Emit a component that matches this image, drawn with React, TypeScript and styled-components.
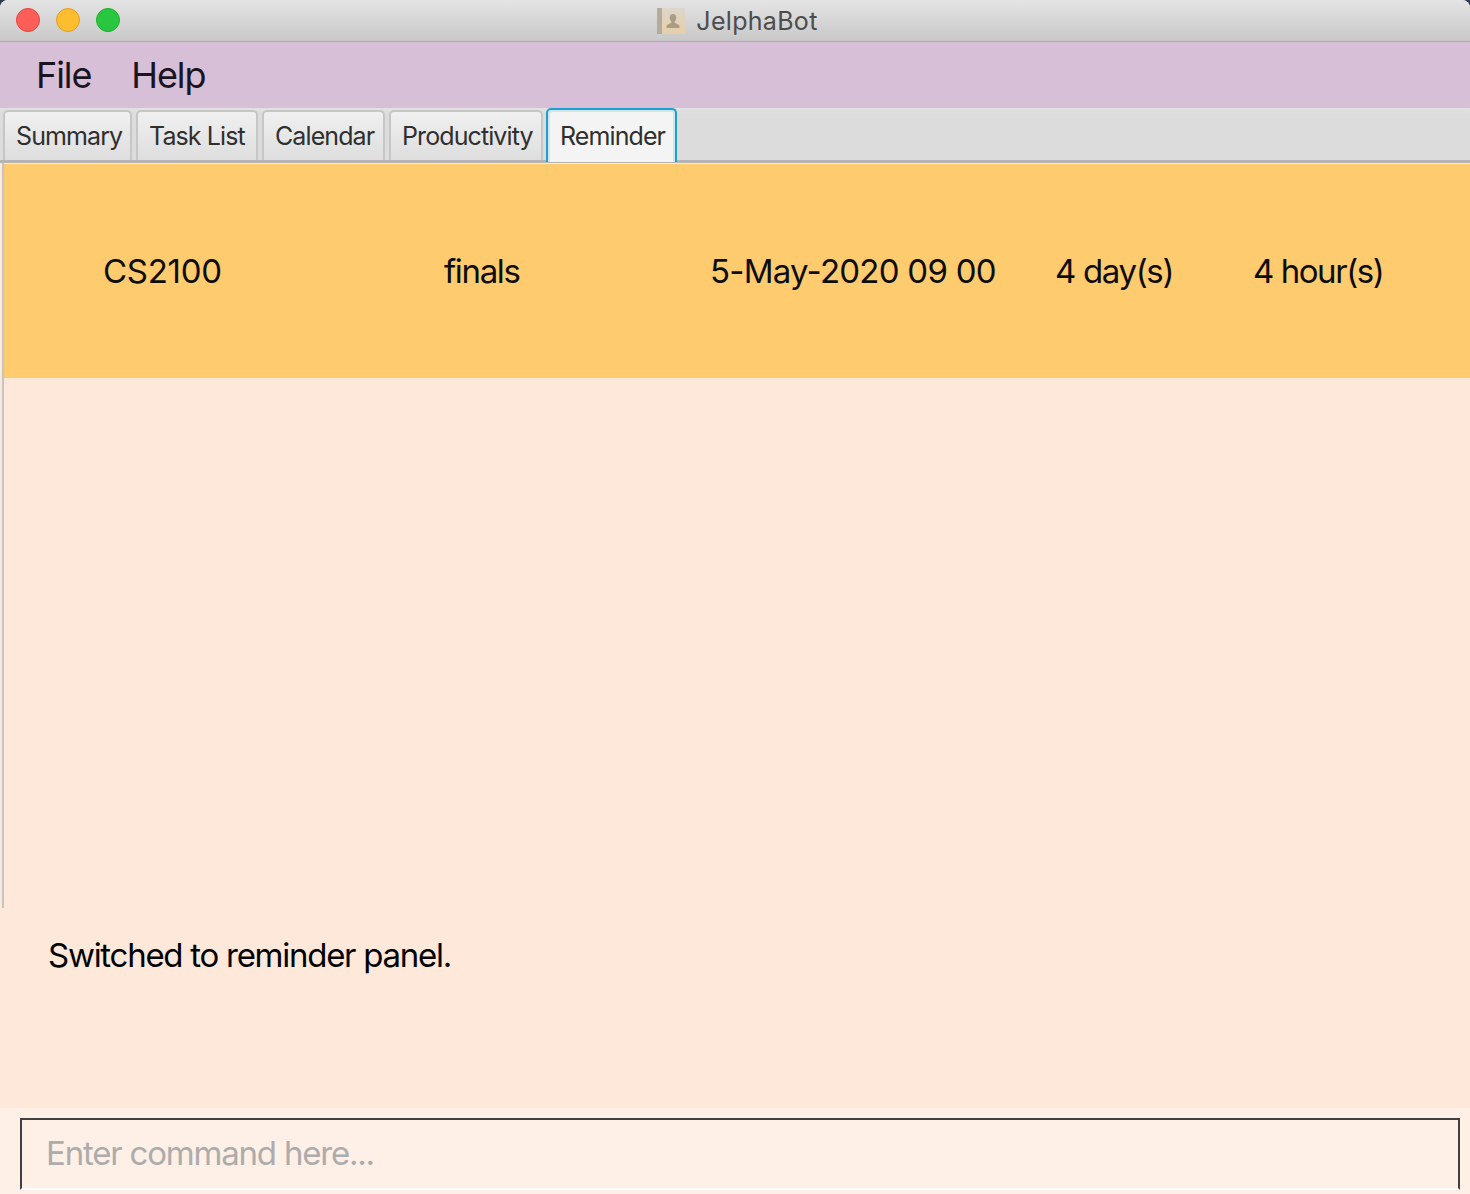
import styled, { createGlobalStyle } from "styled-components";

const tabs = [
  { label: "Summary", width: 129 },
  { label: "Task List", width: 122 },
  { label: "Calendar", width: 123 },
  { label: "Productivity", width: 154 },
  { label: "Reminder", width: 131 },
];

const GlobalStyle = createGlobalStyle`
  html, body {
    margin: 0;
    padding: 0;
    background: #2b3a55;
  }
`;

function AppIcon() {
  return (
    <svg width="28" height="26" viewBox="0 0 28 26">
      <defs>
        <linearGradient id="book" x1="0" y1="0" x2="0" y2="1">
          <stop offset="0" stopColor="#dcd6cc" />
          <stop offset="1" stopColor="#e6cfa8" />
        </linearGradient>
      </defs>
      <rect x="0" y="0" width="28" height="26" rx="1" fill="url(#book)" />
      <rect x="0" y="0" width="5" height="26" fill="#b5ab9b" />
      <path
        d="M16 6c2.200 0 3.300 1.700 3.300 3.800 0 1.700-.8 3-1.500 3.700v1.500c1.800.8 4.700 1.500 4.700 3.500v1.500h-13v-1.500c0-2 2.900-2.700 4.700-3.500v-1.500c-.7-.7-1.500-2-1.500-3.700C12.700 7.700 13.800 6 16 6z"
        fill="#ab9c86"
      />
    </svg>
  );
}

export default function App() {
  return (
    <>
      <GlobalStyle />
      <Window>
        <TitleBar>
          <Lights>
            <Light $fill="#fd5f58" $edge="#e0443e" />
            <Light $fill="#febc2f" $edge="#dfa023" />
            <Light $fill="#29c73f" $edge="#1dad2b" />
          </Lights>
          <WindowTitle>
            <AppIcon />
            JelphaBot
          </WindowTitle>
        </TitleBar>
        <MenuBar>
          <MenuItem>File</MenuItem>
          <MenuItem>Help</MenuItem>
        </MenuBar>
        <TabBar>
          {tabs.map((tab) => (
            <Tab key={tab.label} $width={tab.width} $active={tab.label === "Reminder"}>
              <TabLabel>{tab.label}</TabLabel>
            </Tab>
          ))}
        </TabBar>
        <Panel>
          <ReminderCard>
            <ModuleCell>CS2100</ModuleCell>
            <DescCell>finals</DescCell>
            <DateCell>5-May-2020 09 00</DateCell>
            <DaysCell>4 day(s)</DaysCell>
            <HoursCell>4 hour(s)</HoursCell>
          </ReminderCard>
        </Panel>
        <ResultBox>Switched to reminder panel.</ResultBox>
        <CommandBox>
          <CommandInput placeholder="Enter command here..." readOnly />
        </CommandBox>
      </Window>
    </>
  );
}

const Window = styled.div`
  width: 1470px;
  height: 1194px;
  overflow: hidden;
  border-radius: 8px 8px 0 0;
  display: flex;
  flex-direction: column;
  font-family: Inter, "Liberation Sans", sans-serif;
  background: #fee8da;
`;

const TitleBar = styled.div`
  height: 41px;
  flex: none;
  position: relative;
  display: flex;
  align-items: center;
  justify-content: center;
  background: linear-gradient(#e4e4e4, #c8c8c8);
  border-bottom: 1px solid #a9a9a9;
`;

const Lights = styled.div`
  position: absolute;
  left: 16px;
  top: 8px;
  display: flex;
  gap: 16px;
`;

const Light = styled.span<{ $fill: string; $edge: string }>`
  width: 24px;
  height: 24px;
  box-sizing: border-box;
  border-radius: 50%;
  background: ${({ $fill }) => $fill};
  border: 1px solid ${({ $edge }) => $edge};
`;

const WindowTitle = styled.div`
  display: flex;
  align-items: center;
  gap: 11px;
  margin-left: 5px;
  font-size: 25px;
  letter-spacing: 0.3px;
  color: #4c4c4c;
`;

const MenuBar = styled.div`
  height: 66px;
  flex: none;
  display: flex;
  align-items: center;
  gap: 40px;
  padding: 0 0 0 36px;
  background: #d7bfd8;
`;

const MenuItem = styled.span`
  font-size: 36px;
  letter-spacing: -1.100px;
  color: #1a1420;
`;

const TabBar = styled.div`
  height: 52px;
  flex: none;
  display: flex;
  align-items: flex-end;
  gap: 4px;
  padding-left: 3px;
  background: linear-gradient(#e2e2e2, #dcdcdc 12%);
  border-bottom: 3px solid #b4b4b4;
  box-sizing: content-box;
`;

const Tab = styled.div<{ $active?: boolean; $width: number }>`
  width: ${({ $width }) => $width}px;
  height: ${({ $active }) => ($active ? "54px" : "50px")};
  margin: 0 0 ${({ $active }) => ($active ? "-2px" : "0")} ${({ $active }) => ($active ? "-1px" : "0")};
  box-sizing: border-box;
  display: flex;
  align-items: center;
  padding: 0 ${({ $active }) => ($active ? "8px" : "7px")} 0 ${({ $active }) => ($active ? "12px" : "11px")};
  border-radius: 5px 5px 0 0;
  border: ${({ $active }) => ($active ? "2px solid #1f9fd0" : "2px solid #c6c6c6")};
  border-bottom: none;
  background: ${({ $active }) =>
    $active ? "#f4f4f4" : "linear-gradient(#f0f0f0, #dedede)"};
  box-shadow: ${({ $active }) => ($active ? "inset 2px 2px 0 #cfe6ef, inset -2px 0 0 #cfe6ef" : "none")};
  font-size: 25px;
  letter-spacing: -0.900px;
  color: #2f2f2f;
`;

const TabLabel = styled.span`
  flex: 1;
  min-width: 0;
  overflow: hidden;
  white-space: nowrap;
`;

const Panel = styled.div`
  flex: 1;
  min-height: 0;
  margin-left: 2px;
  padding-top: 1px;
  background: #fee8da;
  border-left: 2px solid #c4c4c4;
`;

const ReminderCard = styled.div`
  height: 214px;
  display: flex;
  align-items: center;
  background: #fecb6e;
  font-size: 33px;
  color: #0d0d0d;
  white-space: nowrap;
`;

const ModuleCell = styled.span`
  width: 440px;
  padding-left: 99px;
  box-sizing: border-box;
  letter-spacing: -0.300px;
`;

const DescCell = styled.span`
  width: 267px;
  letter-spacing: -1.350px;
`;

const DateCell = styled.span`
  width: 345px;
  margin-left: -1px;
  letter-spacing: -0.750px;
`;

const DaysCell = styled.span`
  width: 198px;
  letter-spacing: -1.350px;
`;

const HoursCell = styled.span`
  letter-spacing: -1.450px;
`;

const ResultBox = styled.div`
  height: 200px;
  flex: none;
  box-sizing: border-box;
  padding: 27px 0 0 48px;
  background: #fee8da;
  font-size: 33px;
  letter-spacing: -1.270px;
  color: #000;
`;

const CommandBox = styled.div`
  height: 86px;
  flex: none;
  box-sizing: border-box;
  padding: 10px 10px 0 20px;
  background: #fef0e6;
`;

const CommandInput = styled.input`
  display: block;
  width: 100%;
  height: 72px;
  box-sizing: border-box;
  padding: 0 0 2px 24px;
  background: #fef0e6;
  border: 2px solid #40403e;
  border-bottom: 2px solid #fff;
  border-radius: 0;
  outline: none;
  font-family: inherit;
  font-size: 33px;
  letter-spacing: -1.200px;

  &::placeholder {
    color: #acacac;
    opacity: 1;
  }
`;
